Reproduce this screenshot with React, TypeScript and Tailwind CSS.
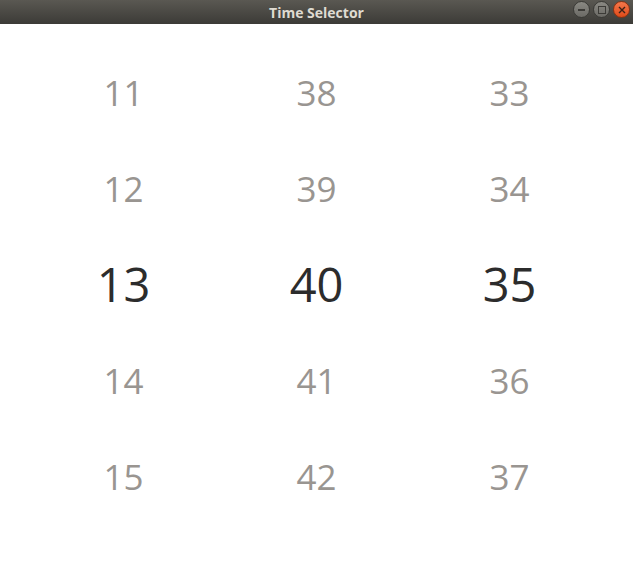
import React from "react";

const columns = [
  [11, 12, 13, 14, 15],
  [38, 39, 40, 41, 42],
  [33, 34, 35, 36, 37],
];

function TitleBar() {
  return (
    <div className="relative flex h-[24px] items-center justify-center bg-gradient-to-b from-[#5a5852] to-[#3c3b37]">
      <span className="text-[14px] font-bold text-[#dfdbd2]" style={{ fontFamily: '"Open Sans", "DejaVu Sans", sans-serif' }}>
        Time Selector
      </span>
      <div className="absolute right-[3px] top-[1px] flex gap-[3px]">
        <div className="flex h-[17px] w-[17px] items-center justify-center rounded-full border border-[#3a3a36] bg-gradient-to-b from-[#8a8983] to-[#6b6a65]">
          <div className="h-[2px] w-[7px] bg-[#3c3b37]" />
        </div>
        <div className="flex h-[17px] w-[17px] items-center justify-center rounded-full border border-[#3a3a36] bg-gradient-to-b from-[#8a8983] to-[#6b6a65]">
          <div className="h-[8px] w-[8px] border-[1.5px] border-[#3c3b37]" />
        </div>
        <div className="flex h-[17px] w-[17px] items-center justify-center rounded-full border border-[#8a3212] bg-gradient-to-b from-[#f5774a] to-[#df4a16]">
          <svg width="8" height="8" viewBox="0 0 8 8">
            <path d="M1 1 L7 7 M7 1 L1 7" stroke="#3c2116" strokeWidth="1.4" />
          </svg>
        </div>
      </div>
    </div>
  );
}

export default function App() {
  return (
    <div className="h-[579px] w-[633px] overflow-hidden bg-white">
      <TitleBar />
      <div
        className="grid grid-cols-3 px-[27px] pt-[20px]"
        style={{ fontFamily: '"Open Sans", "DejaVu Sans", sans-serif' }}
      >
        {columns.map((col, ci) => (
          <div key={ci} className="flex flex-col">
            {col.map((n, ri) =>
              ri === 2 ? (
                <div key={n} className="flex h-[96px] items-center justify-center text-[47px] leading-none text-[#2c2c2c]">
                  {n}
                </div>
              ) : (
                <div key={n} className="flex h-[96px] items-center justify-center text-[35px] leading-none text-[#999591]">
                  {n}
                </div>
              )
            )}
          </div>
        ))}
      </div>
    </div>
  );
}
